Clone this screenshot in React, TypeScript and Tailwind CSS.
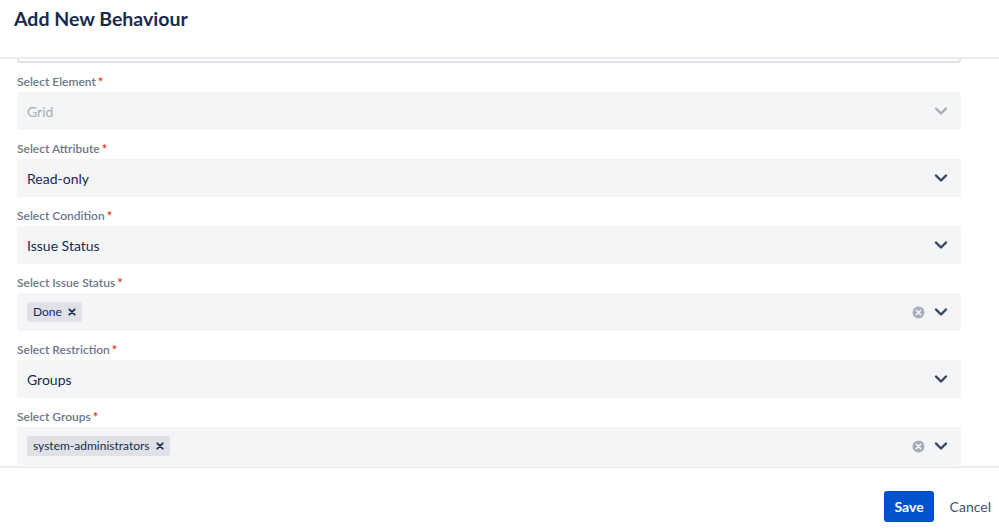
import React from "react";

const font = { fontFamily: 'Lato, "Noto Sans", "Liberation Sans", sans-serif' };

function Chevron({ disabled }: { disabled?: boolean }) {
  return (
    <svg width="14" height="10" viewBox="0 0 14 10" className={disabled ? "text-[#A5ADBA]" : "text-[#344563]"}>
      <path d="M2 2.5 L7 7.5 L12 2.5" stroke="currentColor" strokeWidth="2.4" fill="none" strokeLinecap="round" strokeLinejoin="round" />
    </svg>
  );
}

function ClearIcon() {
  return (
    <svg width="13" height="13" viewBox="0 0 13 13">
      <circle cx="6.5" cy="6.5" r="6" fill="#A5ADBA" />
      <path d="M4.3 4.3 L8.7 8.7 M8.7 4.3 L4.3 8.7" stroke="#F4F5F7" strokeWidth="1.6" strokeLinecap="round" />
    </svg>
  );
}

function SmallX() {
  return (
    <svg width="8" height="8" viewBox="0 0 8 8" className="text-[#172B4D]">
      <path d="M1.3 1.3 L6.7 6.7 M6.7 1.3 L1.3 6.7" stroke="currentColor" strokeWidth="1.8" strokeLinecap="round" />
    </svg>
  );
}

function Label({ text }: { text: string }) {
  return (
    <div className="h-[21px] flex items-center text-[12px] font-semibold text-[#6B778C] leading-none">
      {text}
      <span className="text-[#DE350B] ml-[2px] text-[13px] relative top-[1px]">*</span>
    </div>
  );
}

function Tag({ text }: { text: string }) {
  return (
    <div className="flex items-center h-[20px] bg-[#DFE1E6] rounded-[3px] pl-[6px] pr-[6px] text-[12px] text-[#172B4D]">
      <span>{text}</span>
      <span className="ml-[6px] flex items-center"><SmallX /></span>
    </div>
  );
}

function Field({
  label,
  value,
  disabled,
  tags,
}: {
  label: string;
  value?: string;
  disabled?: boolean;
  tags?: string[];
}) {
  return (
    <div className="mt-[8px]">
      <Label text={label} />
      <div className="h-[38px] bg-[#F4F5F7] rounded-[3px] flex items-center pl-[10px] pr-[13px]">
        <div className="flex-1 flex items-center">
          {tags ? (
            <div className="flex gap-1">{tags.map((t) => <Tag key={t} text={t} />)}</div>
          ) : (
            <span className={"text-[14px] " + (disabled ? "text-[#A5ADBA]" : "text-[#172B4D]")}>{value}</span>
          )}
        </div>
        <div className="flex items-center">
          {tags && <span className="mr-[9px] flex"><ClearIcon /></span>}
          <Chevron disabled={disabled} />
        </div>
      </div>
    </div>
  );
}

export default function App() {
  return (
    <div className="w-[999px] h-[531px] bg-white flex flex-col overflow-hidden" style={font}>
      <div className="h-[57px] shrink-0 flex items-start pl-[14px] pt-[7px]">
        <h1 className="text-[19.5px] font-bold text-[#172B4D] leading-[24px]">Add New Behaviour</h1>
      </div>
      <div className="border-t-2 border-[#EBECF0] flex-1 overflow-hidden px-[17px] pr-[38px]">
        <div className="h-[4px] border-x-2 border-b-2 border-[#DFE1E6] rounded-b-[3px]" />
        <Field label="Select Element" value="Grid" disabled />
        <Field label="Select Attribute" value="Read-only" />
        <Field label="Select Condition" value="Issue Status" />
        <Field label="Select Issue Status" tags={["Done"]} />
        <Field label="Select Restriction" value="Groups" />
        <Field label="Select Groups" tags={["system-administrators"]} />
      </div>
      <div className="h-[65px] shrink-0 border-t-2 border-[#EBECF0] flex items-start justify-end pt-[23px] pr-0">
        <button className="h-[31px] px-[10px] bg-[#0052CC] rounded-[3px] text-white text-[14px] font-bold">Save</button>
        <button className="h-[31px] px-[8px] ml-[8px] text-[#42526E] text-[14px]">Cancel</button>
      </div>
    </div>
  );
}
